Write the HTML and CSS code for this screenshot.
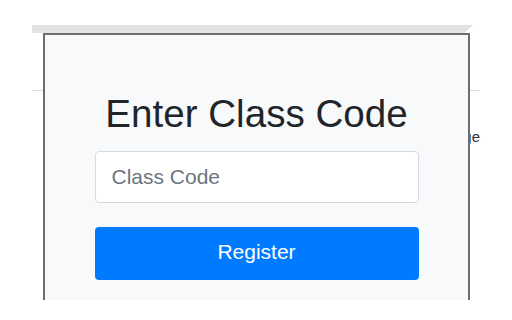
FILE: index.html
```html
<!DOCTYPE html>
<html>
<head>
<meta charset="utf-8">
<link rel="stylesheet" href="styles.css">
</head>
<body>
<div class="page">
  <div class="topbar"></div>
  <div class="rule"></div>
  <div class="bgtext">Manage</div>
</div>
<div class="modal">
  <h1 class="title">Enter Class Code</h1>
  <input class="code-input" type="text" placeholder="Class Code">
  <button class="register-btn" type="button">Register</button>
</div>
</body>
</html>
```
FILE: styles.css
```css
html, body {
  margin: 0;
  padding: 0;
  background: #ffffff;
  font-family: "Liberation Sans", Arial, sans-serif;
}

.page {
  margin-left: 32px;
  width: 448px;
  padding-top: 25px;
}

.topbar {
  height: 8px;
  width: 441px;
  background: #e2e2e2;
  clip-path: polygon(0 0, 100% 0, 98% 100%, 0 100%);
}

.rule {
  margin-top: 57px;
  border-top: 1px solid #dcdcdc;
}

.bgtext {
  margin-top: 38px;
  text-align: right;
  font-size: 15px;
  color: #333;
  line-height: 16px;
}

.modal {
  position: absolute;
  left: 43px;
  top: 33px;
  width: 423px;
  height: 267px;
  border: 2px solid #6e6e6e;
  border-bottom: none;
  background: #f8f9fa;
  display: flex;
  flex-direction: column;
  align-items: center;
  padding-top: 56px;
  box-sizing: border-box;
  width: 427px;
}

.title {
  margin: 0;
  font-weight: 400;
  font-size: 38.6px;
  line-height: 1.2;
  color: #212529;
}

.code-input {
  margin-top: 14px;
  width: 324px;
  height: 52px;
  box-sizing: border-box;
  border: 1px solid #d6d9dd;
  border-radius: 4px;
  background: #fff;
  padding: 0 16px;
  font-family: inherit;
  font-size: 21px;
  color: #495057;
  outline: none;
}

.code-input::placeholder {
  color: #6c757d;
}

.register-btn {
  margin-top: 24px;
  width: 324px;
  height: 53px;
  border: none;
  border-radius: 4px;
  background: #007bff;
  color: #fff;
  font-family: inherit;
  font-size: 21px;
  padding: 0 0 4px 0;
}
```
